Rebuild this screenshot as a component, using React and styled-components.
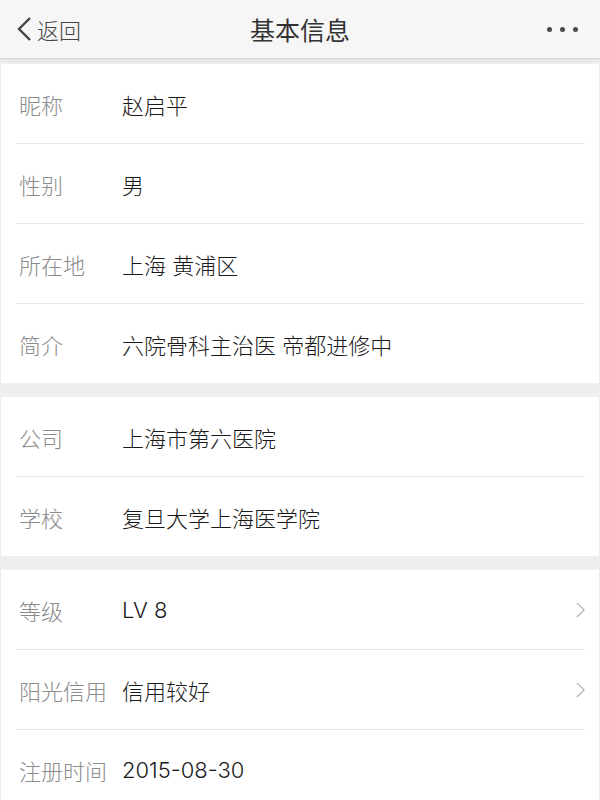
import styled, { createGlobalStyle } from "styled-components";

const Global = createGlobalStyle`
  body {
    margin: 0;
    background: #efeff0;
    font-family: Inter, "Noto Sans CJK SC", "Noto Sans", sans-serif;
  }
`;

const rows = [
  [
    { label: "昵称", value: "赵启平" },
    { label: "性别", value: "男" },
    { label: "所在地", value: "上海 黄浦区" },
    { label: "简介", value: "六院骨科主治医 帝都进修中" },
  ],
  [
    { label: "公司", value: "上海市第六医院" },
    { label: "学校", value: "复旦大学上海医学院" },
  ],
  [
    { label: "等级", value: "LV 8", link: true },
    { label: "阳光信用", value: "信用较好", link: true },
    { label: "注册时间", value: "2015-08-30" },
  ],
];

function App() {
  return (
    <Page>
      <Global />
      <NavBar>
        <Back>
          <svg width="17" height="26" viewBox="0 0 17 26">
            <path d="M14 2 L3 13 L14 24" fill="none" stroke="#444" strokeWidth="2.4" />
          </svg>
          返回
        </Back>
        <Title>基本信息</Title>
        <More>
          <Dot />
          <Dot />
          <Dot />
        </More>
      </NavBar>
      <Sections>
        {rows.map((group, i) => (
          <Section key={i}>
            {group.map((r) => (
              <Row key={r.label}>
                <Label>{r.label}</Label>
                <Value>{r.value}</Value>
                {r.link && (
                  <svg width="9" height="16" viewBox="0 0 9 16">
                    <path d="M1 1 L8 8 L1 15" fill="none" stroke="#b8b8b8" strokeWidth="1.4" />
                  </svg>
                )}
              </Row>
            ))}
          </Section>
        ))}
      </Sections>
    </Page>
  );
}

const Page = styled.div`
  width: 600px;
  height: 800px;
  overflow: hidden;
  background: #efeff0;
`;

const NavBar = styled.div`
  height: 58px;
  display: flex;
  align-items: center;
  justify-content: space-between;
  padding: 0 22px 0 16px;
  background: #f6f6f6;
  border-bottom: 1px solid #d6d6d6;
  box-shadow: 0 2px 5px rgba(0, 0, 0, 0.05);
  position: relative;
  z-index: 1;
`;

const Back = styled.div`
  display: flex;
  align-items: center;
  gap: 4px;
  font-size: 22px;
  font-weight: 300;
  color: #444;
`;

const Title = styled.div`
  position: absolute;
  left: 0;
  right: 0;
  text-align: center;
  font-size: 25px;
  color: #333;
  pointer-events: none;
`;

const More = styled.div`
  display: flex;
  gap: 8px;
  align-items: center;
`;

const Dot = styled.span`
  width: 5px;
  height: 5px;
  border-radius: 50%;
  background: #4a4a4a;
`;

const Sections = styled.div`
  display: flex;
  flex-direction: column;
  gap: 14px;
  padding-top: 5px;
`;

const Section = styled.div`
  background: #fff;
  border-left: 1px solid #ececec;
  border-right: 1px solid #ececec;
  padding: 0 14px 0 16px;
`;

const Row = styled.div`
  height: 79px;
  display: flex;
  align-items: center;
  & + & {
    border-top: 1px solid #e6e6e6;
  }
`;

const Label = styled.div`
  width: 103px;
  padding-left: 2px;
  font-size: 22px;
  font-weight: 300;
  color: #8c8c8c;
  flex-shrink: 0;
`;

const Value = styled.div`
  flex: 1;
  font-size: 22px;
  font-weight: 300;
  color: #1a1a1a;
`;

export default App;
